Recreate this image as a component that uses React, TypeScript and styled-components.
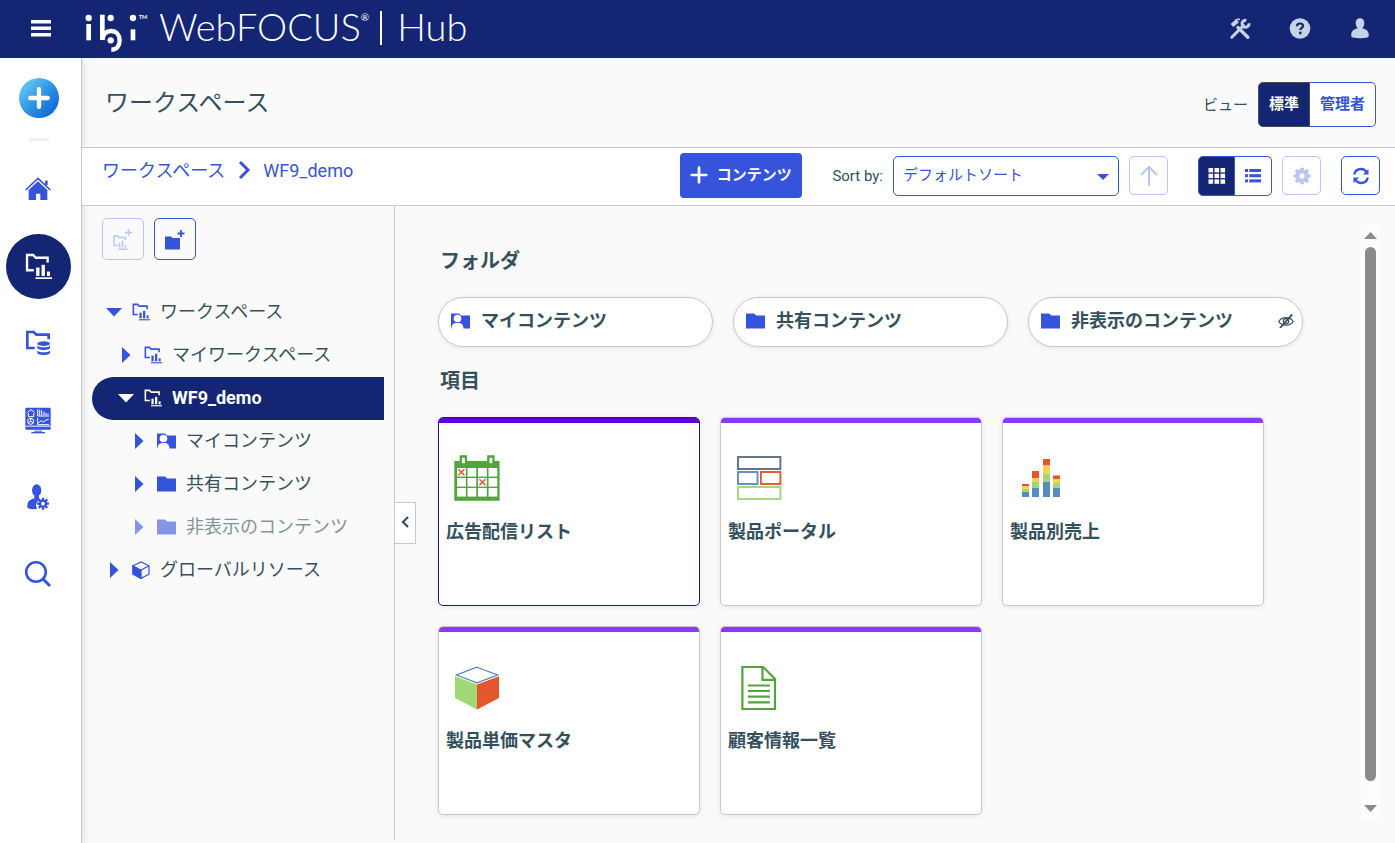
import React from 'react';
import styled, { createGlobalStyle, css } from 'styled-components';

const navy = '#142673';
const blue = '#3653dc';
const ink = '#35505d';
const line = '#c8c8c8';

const GlobalStyle = createGlobalStyle`
  *, *::before, *::after { box-sizing: border-box; }
  body {
    margin: 0;
    background: #fafafa;
    color: ${ink};
    font-family: Roboto, 'Noto Sans CJK JP', sans-serif;
    font-size: 15px;
    line-height: 24px;
  }
  button, select { font: inherit; color: inherit; margin: 0; padding: 0; cursor: pointer; }
  svg { display: block; flex: none; }
  h1, h2, h3, ul { margin: 0; padding: 0; font-weight: inherit; }
  li { list-style: none; }
`;

/* ---------- page frame ---------- */

const Page = styled.div`
  display: flex;
  flex-direction: column;
  min-height: 100vh;
`;

const Header = styled.header`
  display: flex;
  align-items: center;
  height: 58px;
  padding: 0 24px 0 30px;
  background: ${navy};
  color: #fff;
`;

const BareButton = styled.button`
  display: flex;
  align-items: center;
  justify-content: center;
  border: 0;
  background: none;
`;

const Brand = styled.div`
  display: flex;
  align-items: center;
  margin-left: 33px;
  flex: 1;
  white-space: nowrap;
  > svg { margin-top: 8px; }
`;

const BrandText = styled.span`
  padding-bottom: 6px;
  font-family: Lato, sans-serif;
  font-weight: 300;
  font-size: 38px;
  line-height: 52px;
`;

const BrandName = styled(BrandText)`
  margin-left: 10px;
`;

const Registered = styled.span`
  align-self: flex-start;
  margin-top: 10px;
  font-family: Lato, sans-serif;
  font-size: 10px;
  line-height: 14px;
`;

const BrandRule = styled.span`
  width: 2px;
  height: 34px;
  margin: 0 15px 2px 11px;
  background: #fff;
`;

const HeaderTools = styled.div`
  display: flex;
  gap: 38px;
  color: #c5d3e8;
`;

const Body = styled.div`
  display: flex;
  flex: 1;
`;

const Rail = styled.nav`
  display: flex;
  flex-direction: column;
  flex: none;
  width: 82px;
  padding: 20px 10px 20px 6px;
  border-right: 1px solid ${line};
  background: #fff;
  color: ${blue};
  box-shadow: 2px 0 6px rgba(30, 50, 60, 0.12);
`;

const AddButton = styled(BareButton)`
  width: 40px;
  height: 40px;
  margin-left: 13px;
  border-radius: 50%;
  background: linear-gradient(135deg, #6bd3f6 5%, #2f94e4 50%, #0b5fd3 95%);
`;

const RailRule = styled.div`
  width: 20px;
  height: 3px;
  margin: 20px 0 16px 23px;
  background: #f1f1f1;
`;

const RailList = styled.ul`
  display: flex;
  flex-direction: column;
  gap: 12px;
`;

const RailButton = styled(BareButton)<{ $active?: boolean }>`
  width: 65px;
  height: 65px;
  padding: 0 1px 1px 0;
  border-radius: 50%;
  background: ${p => (p.$active ? navy : 'transparent')};
  color: ${p => (p.$active ? '#fff' : blue)};
`;

const Main = styled.main`
  display: flex;
  flex-direction: column;
  flex: 1;
  min-width: 0;
  padding-bottom: 3px;
`;

/* ---------- title and tool bars ---------- */

const TitleBar = styled.div`
  display: flex;
  align-items: center;
  justify-content: space-between;
  height: 90px;
  padding: 0 19px 0 23px;
  border-bottom: 1px solid ${line};
`;

const Title = styled.h1`
  font-size: 24px;
  line-height: 36px;
`;

const ViewSwitch = styled.div`
  display: flex;
  align-items: center;
  gap: 10px;
  padding-top: 4px;
`;

const Segments = styled.div`
  display: flex;
`;

const Segment = styled.button<{ $on?: boolean }>`
  display: flex;
  align-items: center;
  justify-content: center;
  height: 40px;
  width: 37px;
  border: 1px solid ${blue};
  background: ${p => (p.$on ? navy : '#fff')};
  color: ${p => (p.$on ? '#fff' : blue)};
  font-weight: 700;
  &:first-child { border-radius: 5px 0 0 5px; }
  &:last-child { border-radius: 0 5px 5px 0; border-left: 0; }
`;

const TextSegment = styled(Segment)`
  height: 45px;
  width: auto;
  padding: 0 10px 2px;
  ${p => p.$on && css`border-color: #4a4a55;`}
`;

const ToolBar = styled.div`
  display: flex;
  align-items: center;
  height: 58px;
  padding: 0 15px 2px 20px;
  border-bottom: 1px solid ${line};
  background: #fff;
`;

const Crumbs = styled.nav`
  display: flex;
  align-items: center;
  gap: 12px;
  flex: 1;
  padding-bottom: 10px;
  color: ${blue};
  font-size: 18px;
`;

const CrumbLink = styled.a`
  color: inherit;
  text-decoration: none;
`;

const ContentButton = styled.button`
  display: flex;
  align-items: center;
  justify-content: center;
  gap: 8px;
  width: 122px;
  height: 45px;
  padding: 0 2px 2px 0;
  border: 0;
  border-radius: 4px;
  background: ${blue};
  color: #fff;
  font-weight: 700;
`;

const SortLabel = styled.label`
  margin: 0 10px 0 30px;
  white-space: nowrap;
`;

const SelectBox = styled.div`
  position: relative;
  width: 226px;
  margin-right: 10px;
  color: ${blue};
  svg {
    position: absolute;
    right: 10px;
    top: 18px;
    pointer-events: none;
  }
`;

const SortSelect = styled.select`
  appearance: none;
  width: 100%;
  height: 40px;
  padding: 0 30px 2px 9px;
  border: 1px solid ${blue};
  border-radius: 5px;
  background: #fff;
`;

const IconButton = styled.button<{ $size: number }>`
  display: flex;
  align-items: center;
  justify-content: center;
  flex: none;
  width: ${p => p.$size}px;
  height: ${p => p.$size}px;
  border: 1px solid ${blue};
  border-radius: 5px;
  background: #fff;
  color: ${blue};
  &:disabled { border-color: #b9c5f3; color: #b9c5f3; }
`;

const ToolGroup = styled.div`
  display: flex;
  align-items: center;
  gap: 10px;
  margin: 0 20px 0 30px;
`;

/* ---------- tree ---------- */

const Workspace = styled.div`
  display: flex;
  flex: 1;
`;

const TreePanel = styled.aside`
  position: relative;
  flex: none;
  width: 313px;
  padding: 12px 10px;
  border-right: 1px solid ${line};
`;

const TreeTools = styled.div`
  display: flex;
  gap: 10px;
  padding: 0 10px 31px;
  ${IconButton} { background: transparent; }
`;

const indents = [14, 26, 39];

const TreeRow = styled.button<{ $level: number; $selected?: boolean; $dim?: boolean }>`
  display: flex;
  align-items: center;
  gap: 10px;
  width: 100%;
  height: 43px;
  padding: 0 0 1px ${p => indents[p.$level]}px;
  border: 0;
  border-radius: 22px 0 0 22px;
  background: ${p => (p.$selected ? navy : 'transparent')};
  color: ${p => (p.$selected ? '#fff' : blue)};
  opacity: ${p => (p.$dim ? 0.6 : 1)};
  font-size: 18px;
  font-weight: ${p => (p.$selected ? 700 : 400)};
  span { color: ${p => (p.$selected ? '#fff' : ink)}; white-space: nowrap; }
`;

const CollapseHandle = styled(BareButton)`
  position: absolute;
  left: 100%;
  top: 50%;
  width: 22px;
  height: 42px;
  transform: translateY(-50%);
  border: 1px solid ${line};
  background: #fff;
  color: ${ink};
`;

/* ---------- content ---------- */

const Content = styled.section`
  flex: 1;
  min-width: 0;
  padding: 40px 20px 24px 43px;
`;

const SectionTitle = styled.h2`
  padding-left: 2px;
  font-size: 20px;
  line-height: 30px;
  font-weight: 700;
`;

const Folders = styled.div`
  display: grid;
  grid-template-columns: repeat(auto-fill, 275px);
  gap: 20px;
  margin: 21px 0 19px;
`;

const FolderPill = styled.button`
  display: flex;
  align-items: center;
  gap: 11px;
  height: 50px;
  padding: 0 8px 2px 12px;
  border: 1px solid ${line};
  border-radius: 25px;
  background: #fff;
  box-shadow: 0 1px 5px rgba(30, 50, 60, 0.1);
  font-size: 18px;
  font-weight: 700;
  svg:first-child { color: ${blue}; }
  span { flex: 1; text-align: left; }
`;

const Cards = styled.div`
  display: grid;
  grid-template-columns: repeat(auto-fill, 262px);
  gap: 20px;
  margin-top: 21px;
`;

const Card = styled.button<{ $selected?: boolean }>`
  display: flex;
  flex-direction: column;
  align-items: flex-start;
  gap: 16px;
  height: 189px;
  overflow: hidden;
  border: 1px solid ${p => (p.$selected ? navy : line)};
  border-radius: 5px;
  background: #fff;
  box-shadow: 0 1px 5px rgba(30, 50, 60, 0.1);
  text-align: left;
  &::before {
    content: '';
    width: 100%;
    height: 5px;
    margin-bottom: 15px;
    background: ${p => (p.$selected ? '#5f00dc' : '#8c38ff')};
  }
  svg { margin-left: 14px; }
`;

const CardTitle = styled.span`
  padding-left: 7px;
  font-size: 18px;
  line-height: 28px;
  font-weight: 700;
`;

const ScrollTrack = styled.div`
  display: flex;
  flex-direction: column;
  align-items: center;
  flex: none;
  width: 19px;
  margin: 18px 15px 21px 0;
  padding: 8px 0 7px;
  background: #fdfdfd;
  color: #8b8b8b;
`;

const ScrollThumb = styled.div`
  flex: 1;
  width: 11px;
  margin: 8px 0 24px;
  border-radius: 6px;
  background: #8b8b8b;
`;

/* ---------- drawings ---------- */

const IbiLogo = () => (
  <svg width="64" height="40" viewBox="0 0 192 120" fill="#fff">
    <circle cx="11" cy="15" r="9.5" />
    <rect x="4" y="33" width="14" height="49" />
    <rect x="45" y="5" width="14" height="76" />
    <circle cx="77" cy="15" r="9.5" />
    <circle cx="77" cy="82" r="9.5" />
    <path d="M52 81C54 62 63 54 78 54c16 0 26 12 26 28s-9 28-25 28" fill="none" stroke="#fff" strokeWidth="13" />
    <circle cx="144" cy="15" r="9.5" />
    <rect x="137" y="49" width="14" height="33" />
    <text x="161" y="19" fontSize="17" fontWeight="700" fontFamily="Lato, sans-serif">TM</text>
  </svg>
);

const MenuIcon = () => (
  <svg width="22" height="18" viewBox="0 0 22 18" fill="#fff">
    <rect x="1" y="0" width="20" height="3.500" />
    <rect x="1" y="6.500" width="20" height="3.500" />
    <rect x="1" y="13" width="20" height="3.500" />
  </svg>
);

const ToolsIcon = () => (
  <svg width="22" height="22" viewBox="0 0 22 22" fill="none" stroke="currentColor">
    <path d="M9 9.500 18.800 19.200" strokeWidth="3.400" strokeLinecap="round" />
    <path d="M3 7.500 8.600 2.600" strokeWidth="4.200" />
    <path d="M6.500 2.600C8 1.300 9.500 1.100 11 1.500" strokeWidth="1.600" />
    <path d="M2.800 19.300 14.500 7.500" strokeWidth="3" strokeLinecap="round" />
    <path d="M17.300 2.400a3.500 3.500 0 1 0 2.700 2.900" strokeWidth="3" />
  </svg>
);

const HelpIcon = () => (
  <svg width="22" height="22" viewBox="0 0 22 22">
    <circle cx="11" cy="10.500" r="10.300" fill="currentColor" />
    <path d="M8 8.200C8 6.400 9.200 5.500 11 5.500s3 .9 3 2.400c0 1.900-2.700 2-2.700 4.200" fill="none" stroke={navy} strokeWidth="2.200" />
    <rect x="10" y="13.700" width="2.500" height="2.500" fill={navy} />
  </svg>
);

const UserIcon = () => (
  <svg width="22" height="22" viewBox="0 0 22 22" fill="currentColor">
    <path d="M11 .2c2.700 0 4.300 1.900 4.300 4.700 0 2.200-.8 4.200-2.100 5.300 3.200.9 6.500 2.300 6.500 6v2c0 1.200-4 2-8.700 2s-8.700-.8-8.700-2v-2c0-3.700 3.300-5.100 6.500-6-1.300-1.100-2.100-3.100-2.100-5.300C6.700 2.100 8.300.2 11 .2z" />
  </svg>
);

const PlusIcon = ({ size, weight }: { size: number; weight: number }) => (
  <svg width={size} height={size} viewBox="0 0 22 22" fill="none" stroke="#fff" strokeWidth={weight} strokeLinecap="round">
    <path d="M11 3v16M3 11h16" />
  </svg>
);

const HomeIcon = () => (
  <svg width="26" height="24" viewBox="0 0 78 72" fill="currentColor">
    <path d="M2 39 39 4l37 35" fill="none" stroke="currentColor" strokeWidth="5" />
    <path d="M11 39 39 13l28 26v30H46V50H33v19H11z" />
    <rect x="60" y="11" width="8" height="13" />
  </svg>
);

const FolderChartIcon = ({ size }: { size: number }) => (
  <svg width={size} height={size} viewBox="0 0 80 78" fill="currentColor">
    <path d="M26 50H6V5h18l8 8h35v14" fill="none" stroke="currentColor" strokeWidth="7" />
    <rect x="33" y="42" width="10" height="25" />
    <rect x="49" y="34" width="10" height="33" />
    <rect x="65" y="54" width="9" height="13" />
    <rect x="31" y="71" width="49" height="5" />
  </svg>
);

const FolderDataIcon = () => (
  <svg width="26" height="26" viewBox="0 0 78 78" fill="currentColor">
    <path d="M29 54H7V6h19l8 8h37v14" fill="none" stroke="currentColor" strokeWidth="8" />
    <ellipse cx="56" cy="41" rx="19" ry="7" />
    <path d="M37 47c8 6 30 6 38 0v8c-6 7-32 7-38 0z" />
    <path d="M37 62c8 6 30 6 38 0v8c-6 7-32 7-38 0z" />
  </svg>
);

const MonitorIcon = () => (
  <svg width="26" height="27" viewBox="0 0 78 81" fill="currentColor">
    <rect x="1" y="2" width="76" height="66" rx="3" />
    <path d="M1 57.500h76" stroke="#fff" strokeWidth="3" />
    <rect x="28" y="71" width="23" height="3" />
    <rect x="19" y="75" width="41" height="4" />
    <g fill="none" stroke="#fff" strokeWidth="3">
      <path d="M7 16 18 8l11 8M10 18v11h16V18" />
      <circle cx="17" cy="43" r="9" />
      <path d="M17 34v9l8 5M17 43l-8 5" />
      <path d="M38 7v20h34M44 25V8M50 25V10M57 25V14M63 25V18M69 25V20" />
      <path d="M38 33v20h34M40 48l9-7 6 4 8-6 8-2" />
    </g>
  </svg>
);

const gearTeeth = [0, 45, 90, 135];

const UserGearIcon = () => (
  <svg width="26" height="28" viewBox="0 0 78 84" fill="currentColor">
    <ellipse cx="35" cy="22" rx="14" ry="18" />
    <path d="M28 36h14v10l4 3c-14 9-16 20-9 28C22 80 7 78 7 73c0-17 3-21 21-27z" />
    <g transform="translate(54 62)">
      <circle r="9" fill="none" stroke="currentColor" strokeWidth="7" />
      {gearTeeth.map(a => (
        <path key={a} d="M0-18v8M0 10v8" transform={`rotate(${a})`} stroke="currentColor" strokeWidth="7" />
      ))}
    </g>
  </svg>
);

const SearchIcon = () => (
  <svg width="28" height="28" viewBox="0 0 28 28" fill="none" stroke="currentColor" strokeWidth="2.600">
    <circle cx="12" cy="12" r="9.800" />
    <path d="m18.800 18.800 7.200 7.200" strokeWidth="3" />
  </svg>
);

const CrumbArrow = () => (
  <svg width="14" height="20" viewBox="0 0 14 20" fill="none" stroke="currentColor" strokeWidth="3">
    <path d="m3 1 8 8-8 8" />
  </svg>
);

const Caret = ({ open }: { open?: boolean }) => (
  <svg width="16" height="16" viewBox="0 0 16 16" fill="currentColor">
    <path d={open ? 'M0 4h16L8 12.500z' : 'M4 0v16l8.500-8z'} />
  </svg>
);

const SelectArrow = () => (
  <svg width="12" height="6" viewBox="0 0 12 6" fill="currentColor"><path d="M0 0h12L6 6z" /></svg>
);

const UpIcon = () => (
  <svg width="20" height="22" viewBox="0 0 20 22" fill="none" stroke="currentColor" strokeWidth="2">
    <path d="M10 21V2M2 10l8-8 8 8" />
  </svg>
);

const GridIcon = () => (
  <svg width="18" height="16" viewBox="0 0 18 16" fill="currentColor">
    {[0.5, 6.500, 12.500].map(x => [0, 5.700, 11.400].map(y => <rect key={`${x}-${y}`} x={x} y={y} width="4.600" height="4.400" />))}
  </svg>
);

const ListIcon = () => (
  <svg width="16" height="14" viewBox="0 0 16 14" fill="currentColor">
    {[0, 5.200, 10.400].map(y => (
      <g key={y}>
        <rect y={y} width="3" height="3" />
        <rect x="4.300" y={y} width="11.700" height="3" />
      </g>
    ))}
  </svg>
);

const GearIcon = () => (
  <svg width="18" height="18" viewBox="-9 -9 18 18" stroke="currentColor" fill="none">
    <circle r="4.600" strokeWidth="3.800" />
    {gearTeeth.map(a => <path key={a} d="M0-8.300v3M0 5.300v3" transform={`rotate(${a})`} strokeWidth="3.600" />)}
  </svg>
);

const RefreshIcon = () => (
  <svg width="16" height="18" viewBox="0 0 16 18" fill="currentColor">
    <path d="M1.200 7.500C2 4 4.500 2 8 2c2.300 0 4 1 5.200 2.600M14.800 10.500C14 14 11.500 16 8 16c-2.300 0-4-1-5.200-2.600" fill="none" stroke="currentColor" strokeWidth="2.400" />
    <path d="M15.500 2V7.500h-5.700zM.5 16v-5.500h5.700z" />
  </svg>
);

const FolderIcon = () => (
  <svg width="19" height="16" viewBox="0 0 19 16" fill="currentColor">
    <path d="M0 .5h8l2.200 2H19v13H0z" />
  </svg>
);

const MyFolderIcon = () => (
  <svg width="19" height="16" viewBox="0 0 19 16">
    <path d="M0 .5h8l2.200 2H19v13H0z" fill="currentColor" />
    <circle cx="6.500" cy="5.500" r="3.800" fill="#fff" />
    <path d="M.5 16c0-5 2.200-6 6-6s6 1 6 6z" fill="#fff" />
  </svg>
);

const NewWorkspaceIcon = () => (
  <svg width="22" height="22" viewBox="0 0 22 22" fill="none" stroke="currentColor">
    <path d="M6 17.500H2V8h3.500L7 9.500h6.500V12" strokeWidth="1.400" />
    <path d="M7.600 14.500v5M10.600 12.800v6.700M13.500 17v2.500M6.500 21.200h9" strokeWidth="1.500" />
    <path d="M16.500 1v7M13 4.500h7" strokeWidth="1.500" />
  </svg>
);

const NewFolderIcon = () => (
  <svg width="22" height="22" viewBox="0 0 22 22" fill="currentColor">
    <path d="M1 8.500h6L8.500 10H16v11.500H1z" />
    <path d="M17 2v7M13.500 5.500h7" fill="none" stroke="currentColor" strokeWidth="1.800" />
  </svg>
);

const CubeIcon = () => (
  <svg width="18" height="18" viewBox="0 0 18 18" fill="none" stroke="currentColor" strokeWidth="1.200">
    <path d="M1 4.800 9 .9l8 3.900v8.400l-8 4.200z" />
    <path d="M.8 4.800 9 9v8.500l-8.200-4.300z" fill="currentColor" />
    <path d="m9 9 8-4.200" />
  </svg>
);

const ChevronLeft = () => (
  <svg width="8" height="14" viewBox="0 0 8 14" fill="none" stroke="currentColor" strokeWidth="2.200">
    <path d="M7 1 2 6l5 5" />
  </svg>
);

const HiddenIcon = () => (
  <svg width="16" height="14" viewBox="0 0 16 14" fill="none" stroke="currentColor" strokeWidth="1.300">
    <path d="M.7 7.500C4 2.200 12 2.200 15.300 7.500 12 12.400 4 12.400.7 7.500z" />
    <circle cx="8" cy="7.300" r="2.600" />
    <path d="M2 14 14.200.3" strokeWidth="1.800" />
  </svg>
);

const ScrollArrow = ({ down }: { down?: boolean }) => (
  <svg width="13" height="7" viewBox="0 0 13 7" fill="currentColor">
    <path d={down ? 'M0 0h13L6.500 7z' : 'M0 7h13L6.500 0z'} />
  </svg>
);

const CalendarArt = () => (
  <svg width="48" height="48" viewBox="0 0 48 48">
    <path d="M1.300 7h5.300V1.300h7.500V7h20V1.300h7.500V7h5v39.700H1.300z" fill="#52a43c" />
    <rect x="9" y="3.800" width="2.800" height="5.400" fill="#fff" />
    <rect x="36.500" y="3.800" width="2.800" height="5.400" fill="#fff" />
    {[4.100, 14.500, 25, 35.500].map(x => [14, 24, 34].map(y => (
      <rect key={`${x}-${y}`} x={x} y={y} width="8.800" height="8.600" fill="#fff" />
    )))}
    <path d="m5.400 15.300 6 6m0-6-6 6M26.400 25.300l6 6m0-6-6 6" stroke="#e4572c" strokeWidth="1.500" />
  </svg>
);

const PortalArt = () => (
  <svg width="48" height="48" viewBox="0 0 48 48" fill="none" strokeWidth="1.900">
    <rect x="3" y="3" width="42.400" height="12" stroke="#5f6f7c" />
    <rect x="3" y="18" width="19.500" height="12" stroke="#5a8fc6" />
    <rect x="25.900" y="18" width="19.500" height="12" stroke="#e4572c" />
    <rect x="3" y="33" width="42.400" height="12" stroke="#a0d876" />
  </svg>
);

const stacks = [
  { x: 5, tops: [30, 32, 35, 38] },
  { x: 15, tops: [17, 24, 28, 34] },
  { x: 26, tops: [5, 11.500, 20, 28] },
  { x: 36, tops: [21.500, 25, 29, 34] },
];
const stackColors = ['#e4572c', '#ffd05a', '#a0d876', '#558bc1'];

const ChartArt = () => (
  <svg width="48" height="48" viewBox="0 0 48 48">
    {stacks.map(s => s.tops.map((top, i) => (
      <rect key={`${s.x}-${i}`} x={s.x} y={top} width="7" height={(s.tops[i + 1] ?? 43) - top} fill={stackColors[i]} />
    )))}
  </svg>
);

const CubeArt = () => (
  <svg width="48" height="48" viewBox="0 0 48 48">
    <path d="M24 4.200 44.700 12 24 19.800 3.300 12z" fill="#fff" stroke="#4a7fbd" strokeWidth="1.100" />
    <path d="M2 13.200 24 21.600v24.800L2 35z" fill="#a0d876" />
    <path d="M46 13.200 24 21.600v24.800L46 35z" fill="#e4572c" />
  </svg>
);

const ReportArt = () => (
  <svg width="48" height="48" viewBox="0 0 48 48" fill="none" stroke="#52a43c" strokeWidth="2.200">
    <path d="M7.400 4h20.800L40 16v30H7.400z" />
    <path d="M27.500 4v12.800H40" />
    <path d="M12.900 22.500h22M12.900 28h22M12.900 33.700h22M12.900 39.300h22" />
  </svg>
);

/* ---------- data ---------- */

const railItems = [
  { label: 'Home', icon: <HomeIcon /> },
  { label: 'Workspaces', icon: <FolderChartIcon size={27} />, active: true },
  { label: 'Data', icon: <FolderDataIcon /> },
  { label: 'Applications', icon: <MonitorIcon /> },
  { label: 'Users', icon: <UserGearIcon /> },
  { label: 'Search', icon: <SearchIcon /> },
];

const treeItems = [
  { label: 'ワークスペース', level: 0, open: true, icon: <FolderChartIcon size={18} /> },
  { label: 'マイワークスペース', level: 1, icon: <FolderChartIcon size={18} /> },
  { label: 'WF9_demo', level: 1, open: true, selected: true, icon: <FolderChartIcon size={18} /> },
  { label: 'マイコンテンツ', level: 2, icon: <MyFolderIcon /> },
  { label: '共有コンテンツ', level: 2, icon: <FolderIcon /> },
  { label: '非表示のコンテンツ', level: 2, dim: true, icon: <FolderIcon /> },
  { label: 'グローバルリソース', level: 0, icon: <CubeIcon /> },
];

const folders = [
  { label: 'マイコンテンツ', icon: <MyFolderIcon /> },
  { label: '共有コンテンツ', icon: <FolderIcon /> },
  { label: '非表示のコンテンツ', icon: <FolderIcon />, hidden: true },
];

const cards = [
  { label: '広告配信リスト', icon: <CalendarArt />, selected: true },
  { label: '製品ポータル', icon: <PortalArt /> },
  { label: '製品別売上', icon: <ChartArt /> },
  { label: '製品単価マスタ', icon: <CubeArt /> },
  { label: '顧客情報一覧', icon: <ReportArt /> },
];

export default function App() {
  return (
    <Page lang="ja">
      <GlobalStyle />
      <Header>
        <BareButton aria-label="Menu"><MenuIcon /></BareButton>
        <Brand>
          <IbiLogo />
          <BrandName>WebFOCUS</BrandName>
          <Registered>®</Registered>
          <BrandRule />
          <BrandText>Hub</BrandText>
        </Brand>
        <HeaderTools>
          <BareButton aria-label="Tools"><ToolsIcon /></BareButton>
          <BareButton aria-label="Help"><HelpIcon /></BareButton>
          <BareButton aria-label="User"><UserIcon /></BareButton>
        </HeaderTools>
      </Header>

      <Body>
        <Rail>
          <AddButton aria-label="Add"><PlusIcon size={24} weight={4} /></AddButton>
          <RailRule />
          <RailList>
            {railItems.map(item => (
              <li key={item.label}>
                <RailButton aria-label={item.label} $active={item.active}>{item.icon}</RailButton>
              </li>
            ))}
          </RailList>
        </Rail>

        <Main>
          <TitleBar>
            <Title>ワークスペース</Title>
            <ViewSwitch>
              <span>ビュー</span>
              <Segments>
                <TextSegment $on>標準</TextSegment>
                <TextSegment>管理者</TextSegment>
              </Segments>
            </ViewSwitch>
          </TitleBar>

          <ToolBar>
            <Crumbs>
              <CrumbLink href="#workspace">ワークスペース</CrumbLink>
              <CrumbArrow />
              <CrumbLink href="#wf9">WF9_demo</CrumbLink>
            </Crumbs>
            <ContentButton><PlusIcon size={20} weight={3} />コンテンツ</ContentButton>
            <SortLabel htmlFor="sort">Sort by:</SortLabel>
            <SelectBox>
              <SortSelect id="sort"><option>デフォルトソート</option></SortSelect>
              <SelectArrow />
            </SelectBox>
            <IconButton $size={39} disabled aria-label="Sort order"><UpIcon /></IconButton>
            <ToolGroup>
              <Segments>
                <Segment $on aria-label="Grid view"><GridIcon /></Segment>
                <Segment aria-label="List view"><ListIcon /></Segment>
              </Segments>
              <IconButton $size={39} disabled aria-label="Settings"><GearIcon /></IconButton>
            </ToolGroup>
            <IconButton $size={39} aria-label="Refresh"><RefreshIcon /></IconButton>
          </ToolBar>

          <Workspace>
            <TreePanel>
              <TreeTools>
                <IconButton $size={42} disabled aria-label="New workspace"><NewWorkspaceIcon /></IconButton>
                <IconButton $size={42} aria-label="New folder"><NewFolderIcon /></IconButton>
              </TreeTools>
              <ul>
                {treeItems.map(item => (
                  <li key={item.label}>
                    <TreeRow $level={item.level} $selected={item.selected} $dim={item.dim}>
                      <Caret open={item.open} />
                      {item.icon}
                      <span>{item.label}</span>
                    </TreeRow>
                  </li>
                ))}
              </ul>
              <CollapseHandle aria-label="Collapse"><ChevronLeft /></CollapseHandle>
            </TreePanel>

            <Content>
              <SectionTitle>フォルダ</SectionTitle>
              <Folders>
                {folders.map(f => (
                  <FolderPill key={f.label}>
                    {f.icon}
                    <span>{f.label}</span>
                    {f.hidden && <HiddenIcon />}
                  </FolderPill>
                ))}
              </Folders>
              <SectionTitle>項目</SectionTitle>
              <Cards>
                {cards.map(c => (
                  <Card key={c.label} $selected={c.selected}>
                    {c.icon}
                    <CardTitle>{c.label}</CardTitle>
                  </Card>
                ))}
              </Cards>
            </Content>
            <ScrollTrack>
              <ScrollArrow />
              <ScrollThumb />
              <ScrollArrow down />
            </ScrollTrack>
          </Workspace>
        </Main>
      </Body>
    </Page>
  );
}
